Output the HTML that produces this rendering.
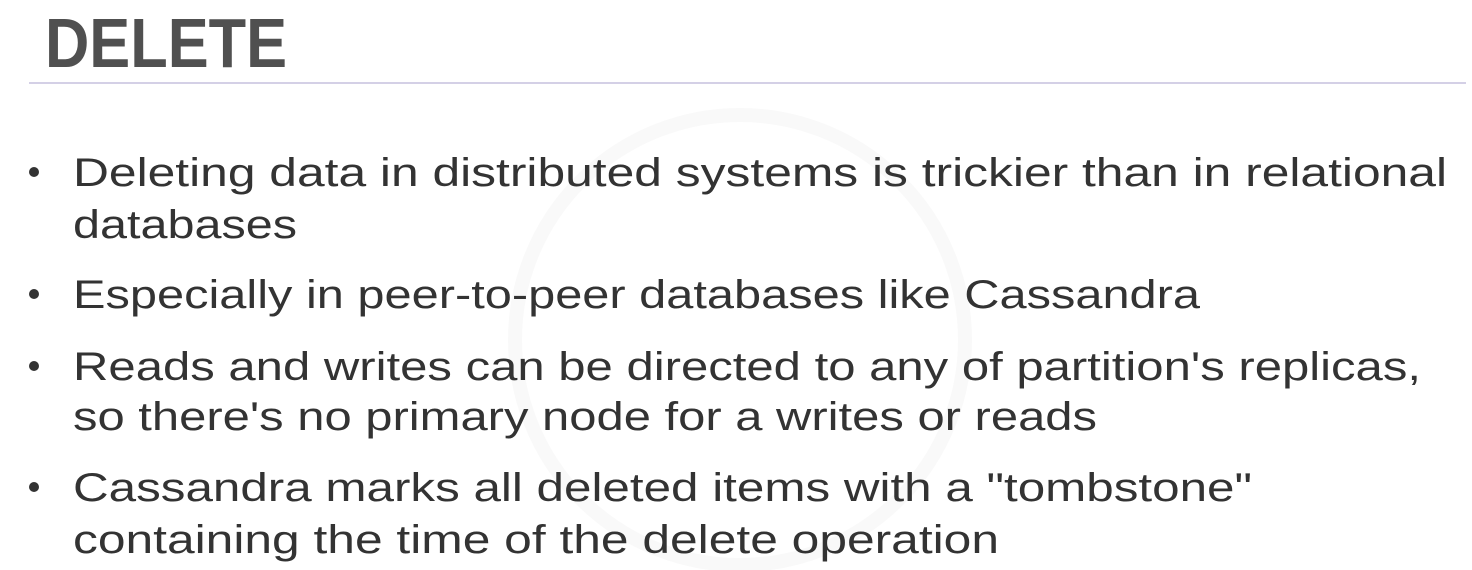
<!DOCTYPE html>
<html><head><style>
html,body{margin:0;padding:0;background:#fff;width:1472px;height:570px;overflow:hidden}
svg{display:block}
</style></head><body>
<svg width="1472" height="570" xmlns="http://www.w3.org/2000/svg">
<rect width="1472" height="570" fill="#fff"/>
<circle cx="740" cy="340" r="225" fill="none" stroke="#f9f9f9" stroke-width="14"/>
<text x="45" y="67" font-family="Liberation Sans, sans-serif" font-weight="bold" font-size="70" fill="#505050" textLength="242" lengthAdjust="spacingAndGlyphs">DELETE</text>
<rect x="29" y="82" width="1437" height="2" fill="#d4d0e6"/>
<g font-family="Liberation Sans, sans-serif" font-size="40" fill="#333">
<circle cx="34" cy="172" r="5" fill="#333"/>
<text x="73" y="186" textLength="1374" lengthAdjust="spacingAndGlyphs">Deleting data in distributed systems is trickier than in relational</text>
<text x="73" y="238" textLength="224" lengthAdjust="spacingAndGlyphs">databases</text>
<circle cx="34" cy="294" r="5" fill="#333"/>
<text x="73" y="308" textLength="1127" lengthAdjust="spacingAndGlyphs">Especially in peer-to-peer databases like Cassandra</text>
<circle cx="34" cy="366" r="5" fill="#333"/>
<text x="73" y="380" textLength="1348" lengthAdjust="spacingAndGlyphs">Reads and writes can be directed to any of partition's replicas,</text>
<text x="73" y="430" textLength="1024" lengthAdjust="spacingAndGlyphs">so there's no primary node for a writes or reads</text>
<circle cx="34" cy="487" r="5" fill="#333"/>
<text x="73" y="501" textLength="1179" lengthAdjust="spacingAndGlyphs">Cassandra marks all deleted items with a "tombstone"</text>
<text x="73" y="553" textLength="926" lengthAdjust="spacingAndGlyphs">containing the time of the delete operation</text>
</g>
</svg>
</body></html>
